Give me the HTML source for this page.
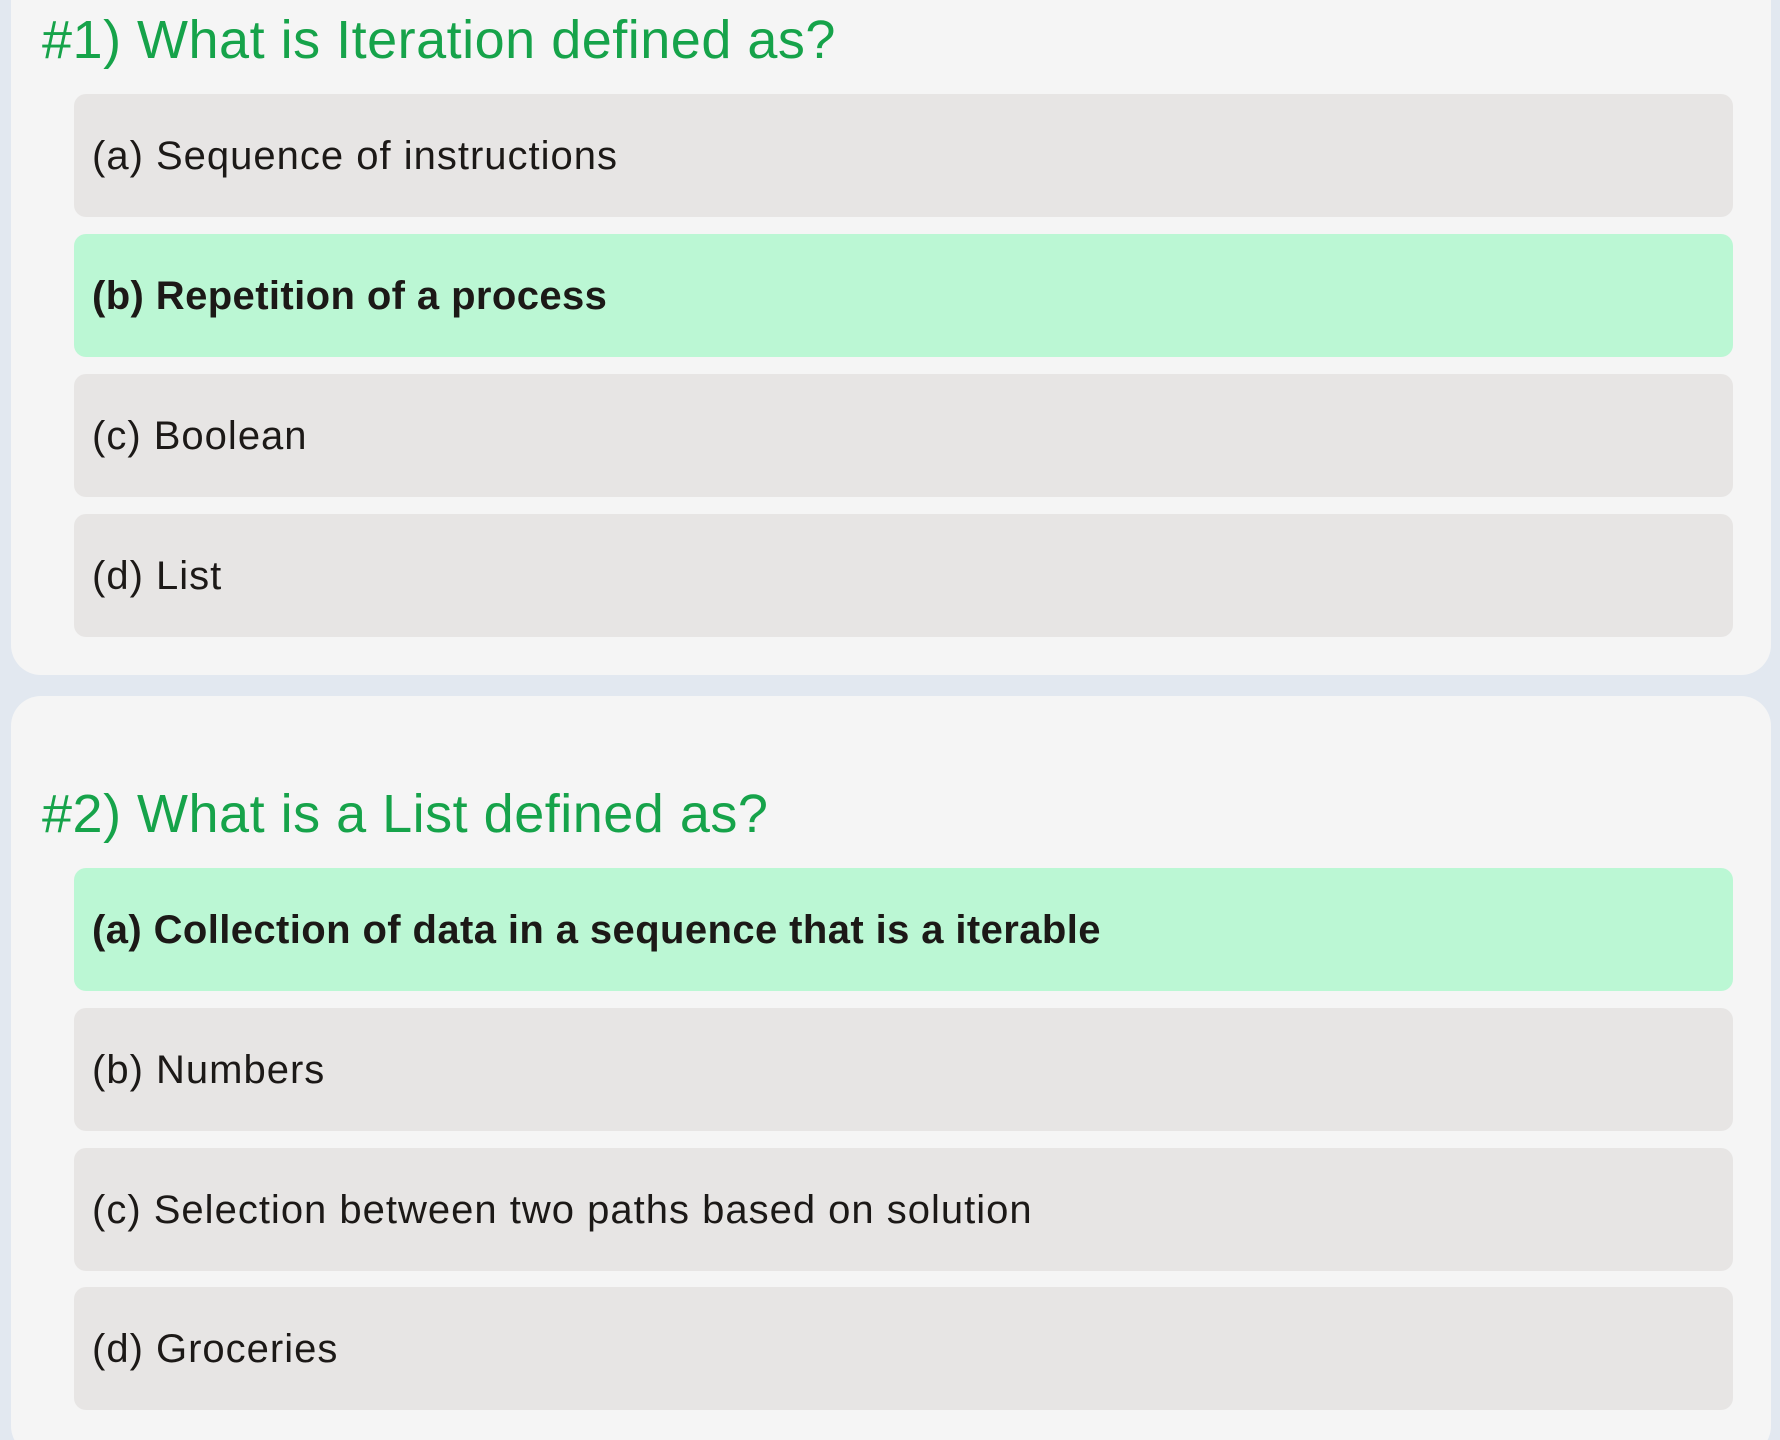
<!DOCTYPE html>
<html><head><meta charset="utf-8"><style>
html,body{margin:0;padding:0;width:1780px;height:1440px;overflow:hidden;background:#e2e8f0;font-family:"Liberation Sans",sans-serif;position:relative;}
.card{position:absolute;left:11px;width:1760px;background:#f5f5f5;border-radius:30px;}
.h{position:absolute;left:42px;color:#16a34a;font-size:54px;letter-spacing:0.5px;line-height:60px;white-space:nowrap;}
.o{position:absolute;left:74px;width:1659px;height:123px;background:#e7e5e4;border-radius:12px;color:#1c1917;font-size:40px;letter-spacing:1px;line-height:125px;text-indent:18px;white-space:nowrap;}
.g{background:#bbf7d4;font-weight:bold;letter-spacing:0.4px;}
</style></head><body>
<div class="card" style="top:-40px;height:715px;"></div>
<div class="card" style="top:696px;height:760px;"></div>
<div class="h" style="top:10px;">#1) What is Iteration defined as?</div>
<div class="o" style="top:94px;">(a) Sequence of instructions</div>
<div class="o g" style="top:234px;">(b) Repetition of a process</div>
<div class="o" style="top:374px;">(c) Boolean</div>
<div class="o" style="top:514px;">(d) List</div>
<div class="h" style="top:784px;">#2) What is a List defined as?</div>
<div class="o g" style="top:868px;">(a) Collection of data in a sequence that is a iterable</div>
<div class="o" style="top:1008px;">(b) Numbers</div>
<div class="o" style="top:1148px;">(c) Selection between two paths based on solution</div>
<div class="o" style="top:1287px;">(d) Groceries</div>
</body></html>
